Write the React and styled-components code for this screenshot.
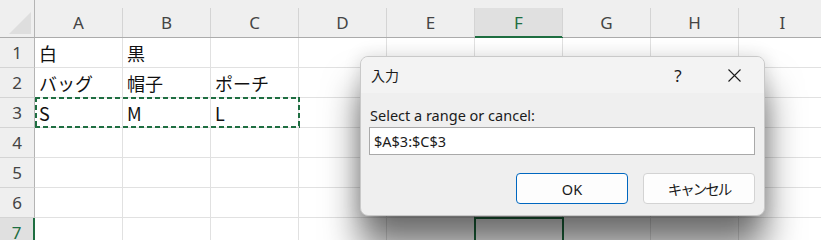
import React from "react";
import styled, { createGlobalStyle, css } from "styled-components";

const GREEN = "#1e6e41";

const Global = createGlobalStyle`
  html, body { margin: 0; padding: 0; background: #ffffff; }
  body { overflow: hidden; }
  * { box-sizing: border-box; }
`;

const Screen = styled.div`
  position: relative;
  width: 821px;
  height: 240px;
  overflow: hidden;
  background: #ffffff;
`;

const Sheet = styled.div`
  display: grid;
  grid-template-columns: 35px repeat(9, 88px);
  grid-template-rows: 38px repeat(7, 30px);
  font-family: "Noto Sans CJK JP", sans-serif;
`;

const placed = css`
  grid-row: ${(p) => p.$r};
  grid-column: ${(p) => p.$c};
`;

const Corner = styled.div`
  grid-row: 1;
  grid-column: 1;
  background: #efefef;
  border-right: 1px solid #b4b4b4;
  border-bottom: 1px solid #ababab;
  display: flex;
  align-items: flex-end;
  justify-content: flex-end;
  padding: 0 3px 3px 0;
`;

const Triangle = styled.span`
  width: 22px;
  height: 22px;
  background: #dedede;
  clip-path: polygon(100% 0, 100% 100%, 0 100%);
`;

const ColHeader = styled.div`
  ${placed};
  background: #efefef;
  padding-top: 8px;
  border-bottom: 1px solid ${(p) => (p.$selected ? GREEN : "#ababab")};
  display: flex;
`;

const ColLabel = styled.div`
  flex: 1;
  border-right: 1px solid #d4d4d4;
  display: flex;
  align-items: center;
  justify-content: center;
  font-family: "Noto Sans", "Open Sans", sans-serif;
  font-size: 17px;
  color: #444444;
  ${(p) =>
    p.$selected &&
    css`
      background: #e0e0e0;
      color: ${GREEN};
      box-shadow: inset 0 -1px 0 ${GREEN};
    `}
`;

const RowHeader = styled.div`
  ${placed};
  background: ${(p) => (p.$selected ? "#e0e0e0" : "#efefef")};
  border-right: ${(p) => (p.$selected ? `2px solid ${GREEN}` : "1px solid #b4b4b4")};
  border-bottom: 1px solid #d4d4d4;
  display: flex;
  align-items: center;
  justify-content: center;
  font-family: "Noto Sans", "Open Sans", sans-serif;
  font-size: 17px;
  color: ${(p) => (p.$selected ? GREEN : "#444444")};
`;

const Cell = styled.div`
  ${placed};
  border-right: 1px solid #e1e1e1;
  border-bottom: 1px solid #e1e1e1;
  display: flex;
  align-items: center;
  padding-left: 4px;
  font-size: 18px;
  color: #111111;
  white-space: nowrap;
  overflow: hidden;
`;

const MarchingAnts = styled.div`
  position: relative;
  z-index: 1;
  grid-column: 2 / 5;
  grid-row: 4;
  margin-top: -1px;
  margin-right: -1px;
  pointer-events: none;
  background:
    repeating-linear-gradient(90deg, ${GREEN} 0 5px, transparent 5px 8px) top left / 100% 2px no-repeat,
    repeating-linear-gradient(90deg, ${GREEN} 0 5px, transparent 5px 8px) bottom left / 100% 2px no-repeat,
    repeating-linear-gradient(180deg, ${GREEN} 0 5px, transparent 5px 8px) top left / 2px 100% no-repeat,
    repeating-linear-gradient(180deg, ${GREEN} 0 5px, transparent 5px 8px) top right / 2px 100% no-repeat;
`;

const ActiveCell = styled.div`
  position: relative;
  z-index: 1;
  grid-column: 7;
  grid-row: 8;
  margin: -1px -1px 0 -1px;
  border: 2px solid ${GREEN};
  border-bottom: none;
  pointer-events: none;
`;

const Dialog = styled.div`
  position: absolute;
  left: 360px;
  top: 56px;
  width: 405px;
  height: 160px;
  z-index: 5;
  display: flex;
  flex-direction: column;
  background: #efefef;
  border: 1px solid #c9c9c9;
  border-radius: 8px;
  overflow: hidden;
  box-shadow: 0 0 18px rgba(0, 0, 0, 0.14), 0 32px 36px rgba(0, 0, 0, 0.55);
  font-family: "Noto Sans", "Noto Sans CJK JP", sans-serif;
  color: #1b1b1b;
`;

const TitleBar = styled.div`
  height: 36px;
  flex: none;
  display: flex;
  align-items: center;
  gap: 13px;
  padding: 0 7px 0 10px;
  background: #f3f3f3;
`;

const Title = styled.span`
  flex: 1;
  font-family: "Noto Sans CJK JP", sans-serif;
  font-size: 14px;
`;

const Help = styled.span`
  width: 40px;
  text-align: center;
  font-size: 17px;
`;

const Close = styled.span`
  width: 46px;
  display: flex;
  align-items: center;
  justify-content: center;
`;

const Body = styled.div`
  flex: 1;
  display: flex;
  flex-direction: column;
  padding: 12px 9px 11px 8px;
`;

const Label = styled.div`
  height: 20px;
  line-height: 20px;
  font-size: 14.5px;
  padding-left: 1px;
`;

const Input = styled.div`
  margin-top: 2px;
  height: 28px;
  border: 1px solid #a9a9a9;
  background: #ffffff;
  display: flex;
  align-items: center;
  padding-left: 4px;
  font-size: 14.5px;
`;

const Buttons = styled.div`
  margin-top: 18px;
  display: flex;
  justify-content: flex-end;
  gap: 15px;
`;

const Button = styled.div`
  width: 112px;
  height: 31px;
  border-radius: 4px;
  background: #fdfdfd;
  border: 1px solid ${(p) => (p.$primary ? "#0067c0" : "#d3d3d3")};
  display: flex;
  align-items: center;
  justify-content: center;
  font-size: 14.5px;
  font-family: "Noto Sans", "Noto Sans CJK JP", sans-serif;
  letter-spacing: ${(p) => (p.$jp ? "-2px" : "0")};
`;

const columns = ["A", "B", "C", "D", "E", "F", "G", "H", "I"];
const data = [
  ["白", "黒", ""],
  ["バッグ", "帽子", "ポーチ"],
  ["S", "M", "L"],
  [],
  [],
  [],
  [],
];

export default function App() {
  return (
    <>
      <Global />
      <Screen>
        <Sheet>
          <Corner>
            <Triangle />
          </Corner>
          {columns.map((c, ci) => (
            <ColHeader key={c} $r={1} $c={ci + 2} $selected={c === "F"}>
              <ColLabel $selected={c === "F"}>{c}</ColLabel>
            </ColHeader>
          ))}
          {data.map((row, r) => (
            <React.Fragment key={r}>
              <RowHeader $r={r + 2} $c={1} $selected={r === 6}>
                {r + 1}
              </RowHeader>
              {columns.map((c, ci) => (
                <Cell key={c} $r={r + 2} $c={ci + 2}>
                  {row[ci] || ""}
                </Cell>
              ))}
            </React.Fragment>
          ))}
          <MarchingAnts />
          <ActiveCell />
        </Sheet>
        <Dialog>
          <TitleBar>
            <Title>入力</Title>
            <Help>?</Help>
            <Close>
              <svg width="13" height="13" viewBox="0 0 13 13">
                <path d="M0.5 0.5 L12.5 12.5 M12.5 0.5 L0.5 12.5" stroke="#1b1b1b" strokeWidth="1.1" fill="none" />
              </svg>
            </Close>
          </TitleBar>
          <Body>
            <Label>Select a range or cancel:</Label>
            <Input>$A$3:$C$3</Input>
            <Buttons>
              <Button $primary>OK</Button>
              <Button $jp>キャンセル</Button>
            </Buttons>
          </Body>
        </Dialog>
      </Screen>
    </>
  );
}
